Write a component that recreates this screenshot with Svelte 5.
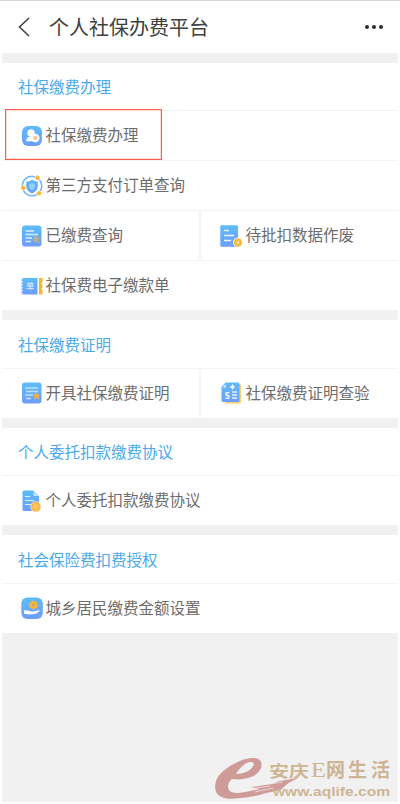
<script>
  const sections = [
    {
      title: "社保缴费办理",
      rows: [
        [{ icon: "person", label: "社保缴费办理", active: true }],
        [{ icon: "shield", label: "第三方支付订单查询" }],
        [
          { icon: "paid", label: "已缴费查询" },
          { icon: "pending", label: "待批扣数据作废" }
        ],
        [{ icon: "ticket", label: "社保费电子缴款单" }]
      ]
    },
    {
      title: "社保缴费证明",
      rows: [
        [
          { icon: "proof", label: "开具社保缴费证明" },
          { icon: "verify", label: "社保缴费证明查验" }
        ]
      ]
    },
    {
      title: "个人委托扣款缴费协议",
      rows: [[{ icon: "contract", label: "个人委托扣款缴费协议" }]]
    },
    {
      title: "社会保险费扣费授权",
      rows: [[{ icon: "hand", label: "城乡居民缴费金额设置" }]]
    }
  ];
</script>

<style>
  :global(body) {
    background: #fff;
  }
  .page {
    position: relative;
    box-sizing: border-box;
    height: 804px;
    display: flex;
    flex-direction: column;
    overflow: hidden;
    padding: 0 2px 2px;
    border-top: 1px solid #d9d9d9;
    font-family: "Noto Sans CJK SC", sans-serif;
  }
  header {
    display: flex;
    align-items: center;
    height: 51.8px;
    padding: 0 14px 0 15px;
  }
  h1 {
    flex: 1;
    margin: 0 0 0 18px;
    font-size: 20px;
    line-height: 30px;
    font-weight: 400;
    color: #404040;
  }
  .back {
    width: 14px;
    height: 22px;
  }
  .more {
    width: 20px;
    height: 6px;
  }
  main {
    flex: 1;
    display: flex;
    flex-direction: column;
    gap: 10px;
    padding-top: 10px;
    background: #f1f1f1;
  }
  section {
    background: #fff;
  }
  h2 {
    display: flex;
    align-items: center;
    box-sizing: border-box;
    height: 47.5px;
    margin: 0;
    padding: 0 0 1px 16px;
    font-size: 15.5px;
    font-weight: 400;
    color: #48aaeb;
  }
  .row {
    display: flex;
    box-sizing: border-box;
    height: 50px;
    border-top: 1px solid #f3f3f3;
  }
  .item {
    position: relative;
    flex: 1;
    display: flex;
    align-items: center;
    padding-left: 18px;
    font-size: 15.5px;
    color: #6c6c6c;
    white-space: nowrap;
  }
  .item + .item {
    border-left: 2px solid #f5f5f5;
  }
  .icon {
    flex: none;
    width: 24px;
    height: 24px;
    margin-right: 1.5px;
  }
  .item + .item .icon {
    margin-right: 2.5px;
  }
  .label {
    padding-bottom: 3px;
  }
  .frame {
    position: absolute;
    box-sizing: border-box;
    left: 3px;
    top: -2px;
    width: 157px;
    height: 51px;
    border: 1px solid #ff5c4a;
    box-shadow: inset 0 0 0 1px #ffd9d3;
  }
  .defs {
    position: absolute;
    width: 0;
    height: 0;
  }
  .watermark {
    position: absolute;
    left: 210px;
    top: 750px;
    width: 190px;
    height: 52px;
  }
</style>

<svg class="defs">
  <defs>
    <linearGradient id="blue" x1="0" y1="0" x2="0" y2="1">
      <stop offset="0" stop-color="#5cbcfb" />
      <stop offset="1" stop-color="#6e9dfd" />
    </linearGradient>
  </defs>
</svg>

<div class="page">
  <header>
    <svg class="back" viewBox="0 0 14 22" fill="none" stroke="#444" stroke-width="1.6">
      <path d="M12 2L2.5 11L12 20" />
    </svg>
    <h1>个人社保办费平台</h1>
    <svg class="more" viewBox="0 0 20 6" fill="#2d2d2d">
      <circle cx="3" cy="3" r="2" />
      <circle cx="10" cy="3" r="2" />
      <circle cx="17" cy="3" r="2" />
    </svg>
  </header>

  <main>
    {#each sections as section}
      <section>
        <h2>{section.title}</h2>
        {#each section.rows as row}
          <div class="row">
            {#each row as item}
              <div class="item">
                <svg class="icon" viewBox="0 0 24 24">
                  {#if item.icon === "person"}
                    <rect x="2" y="2" width="20" height="20" rx="6" fill="url(#blue)" />
                    <circle cx="11" cy="9" r="3.7" fill="#fff" />
                    <path d="M6 17.2c0-3 2-4.7 5-4.7s5 1.7 5 4.7z" fill="#fff" />
                    <circle cx="15.3" cy="14" r="4.2" fill="#fff" />
                    <path d="M13.3 12.2h4v2.2l-2 2.2-2-2.2z" fill="#f5c778" />
                  {:else if item.icon === "shield"}
                    <circle cx="12" cy="12" r="9.8" fill="none" stroke="#6db6fb" stroke-width="1.5" />
                    <path d="M12 5.5c1.7 1.4 3.5 2 5.8 2v4.8c0 3.4-2.3 5.6-5.8 7.2-3.5-1.6-5.8-3.8-5.8-7.2V7.5c2.3 0 4.1-.6 5.8-2z" fill="url(#blue)" />
                    <path d="M12 9l3 1.2v2.3c0 1.7-1.1 2.7-3 3.7-1.9-1-3-2-3-3.7v-2.3z" fill="#91cffb" />
                    <g fill="#fdb62b" stroke="#fff" stroke-width=".6">
                      <circle cx="17.5" cy="3.8" r="2.5" />
                      <circle cx="3.2" cy="13.8" r="2.5" />
                      <circle cx="19" cy="19.2" r="2.5" />
                    </g>
                  {:else if item.icon === "paid"}
                    <rect x="2" y="1.5" width="19.5" height="21" rx="3" fill="url(#blue)" />
                    <path d="M5.5 7H14M5.5 10.5H18M5.5 14H12M5.5 17.5H11" stroke="#d6efff" stroke-width="1.3" />
                    <circle cx="16" cy="15" r="2.5" fill="#aeb49a" stroke="#c4ae78" />
                    <path d="M17.5 17l2.2 2" stroke="#c4ae78" stroke-width="1.4" />
                  {:else if item.icon === "pending"}
                    <rect x="1.3" y="1.3" width="17.7" height="21.5" rx="1" fill="url(#blue)" />
                    <path d="M5 6.5h5M5 11.5h10M5 16.5h7" stroke="#e9f7ff" stroke-width="1.6" />
                    <circle cx="19" cy="18.5" r="5" fill="#fff" />
                    <circle cx="19" cy="18.5" r="4.2" fill="#fab93b" />
                    <circle cx="19" cy="18.5" r="1.3" fill="#fff3d8" />
                  {:else if item.icon === "ticket"}
                    <rect x="1.5" y="4" width="16" height="16.5" fill="url(#blue)" />
                    <path d="M2 4v16.5" stroke="#fff" stroke-width="1.2" stroke-dasharray="1.5 1.5" />
                    <text x="6" y="15" font-size="8" font-weight="700" fill="#c6e5ff">单</text>
                    <path d="M19 4h3.5v4c-1.3.5-1.3 2 0 2.5v3c-1.3.5-1.3 2 0 2.5v4.5H19z" fill="#fcb526" />
                  {:else if item.icon === "proof"}
                    <rect x="2" y="1.5" width="19.5" height="21" rx="3" fill="url(#blue)" />
                    <path d="M5 7h13M6 10.5h12M5 14h8M6 17.5h5" stroke="#bde3ff" stroke-width="1.3" />
                    <path d="M16.5 12l1 1.7 1.9.3-1.2 1.5.3 2-2-.8-2 .8.3-2-1.2-1.5 1.9-.3z" fill="#eeb044" stroke="#eeb044" />
                  {:else if item.icon === "verify"}
                    <rect x="6" y="3" width="16" height="19.5" rx="1.5" fill="#fcce68" />
                    <path d="M6.5 1.5H19q1.5 0 1.5 1.5v16.5q0 1.5-1.5 1.5H4q-1.5 0-1.5-1.5V6z" fill="url(#blue)" />
                    <path d="M6.8 3v3.5H3.5z" fill="#d9f0ff" />
                    <path d="M13.5 3l1 2 2 1-2 1-1 2-1-2-2-1 2-1z" fill="#fff" />
                    <path d="M13 11h5M13 14h5M13 17h5" stroke="#e4f4ff" stroke-width="1.3" />
                    <text x="5.5" y="17.5" font-size="8.5" font-weight="700" fill="#fff">S</text>
                  {:else if item.icon === "contract"}
                    <path d="M4 1.5h9.5L19 7v15H4q-1.5 0-1.5-1V3q0-1.5 1.5-1.5z" fill="url(#blue)" />
                    <path d="M13.5 1.5V7H19z" fill="#c2e6ff" />
                    <path d="M5 7.5h5M5 11.5h9M5 15.5h6" stroke="#e4f4ff" stroke-width="1.2" />
                    <circle cx="15.8" cy="17.8" r="5.2" fill="#fbb645" stroke="#fff" stroke-width=".5" />
                    <path d="M17.5 16h-2.2l-1.3 2 1.3 2h2.2M15.5 18h3" fill="none" stroke="#ffdf9f" stroke-width=".8" />
                  {:else if item.icon === "hand"}
                    <rect x="1.3" y="1.5" width="21.5" height="21.5" rx="6" fill="url(#blue)" />
                    <path d="M13.5 5l3.7 2v4l-3.7 2-3.7-2V7z" fill="#f5b63d" stroke="#f5b63d" stroke-linejoin="round" />
                    <circle cx="13.5" cy="9" r="1.2" fill="#9fa98c" />
                    <path d="M4 14.2h2.5c2 0 2.6 1.2 4.6 1.2h2.4l5.3-1.2c.9 0 .9.9.3 1.3-2 1.5-3.3 2.8-6.3 2.8H8c-1 0-1.8-.6-4-.6z" fill="#fff" />
                  {/if}
                </svg>
                <span class="label">{item.label}</span>
                {#if item.active}
                  <div class="frame"></div>
                {/if}
              </div>
            {/each}
          </div>
        {/each}
      </section>
    {/each}
  </main>

  <svg class="watermark" viewBox="0 0 190 52">
    <path
      d="M43 7C31 7 8 19 5.5 32c-2 11 4 17 19 15.5 14-1 24-3 32-5.500l14-3 8-7 10-5-19 3-8 3-20 3 8 2C37 41 19 46 18 36c0-3 1-6 4-8 14 2 26-3 29-11 2-6-1-10-8-10zm-3 4c7-1 3 7-3 9.500-3 1.500-7 2.500-11 2.500 3-5 8-11 14-12z"
      fill="#cf9b99" />
    <path d="M40 38l20-3M45 41l18-4M60 33l13-2" stroke="#f1e5e3" stroke-width=".8" />
    <g fill="#cdb594">
      <text x="59" y="25.5" font-size="16" font-weight="700" textLength="40" lengthAdjust="spacingAndGlyphs">安庆</text>
      <text x="101" y="26" font-size="20" font-family="Liberation Serif, serif" textLength="15" lengthAdjust="spacingAndGlyphs">E</text>
      <text x="116 138 161" y="25.5" font-size="19" font-weight="700">网生活</text>
      <text x="63" y="45" font-size="12" font-family="Liberation Sans, sans-serif" font-weight="700" textLength="117" lengthAdjust="spacingAndGlyphs">www.aqlife.com</text>
    </g>
  </svg>
</div>
